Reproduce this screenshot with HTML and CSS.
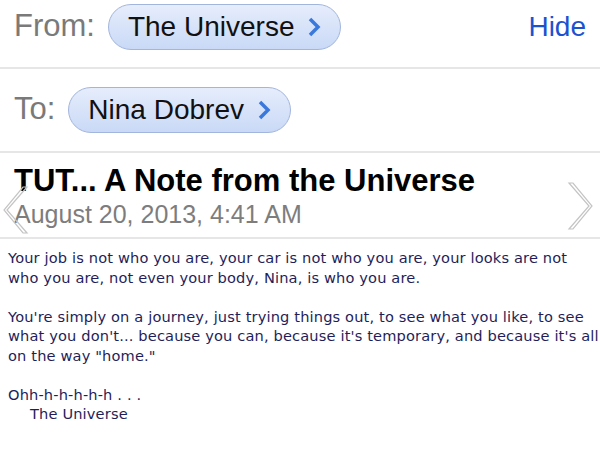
FILE: index.html
```html
<!DOCTYPE html>
<html lang="en">
<head>
    <meta charset="UTF-8">
    <meta name="viewport" content="width=device-width, initial-scale=1.0">
    <title>TUT... A Note from the Universe</title>
    <link rel="stylesheet" href="styles.css">
</head>
<body>

    <!-- Sender -->
    <div class="row row-from">
        <span class="label">From:</span>
        <span class="pill">The Universe
            <svg class="pill-arrow" viewBox="0 0 14 22"><path d="M3 3 L11 11 L3 19" /></svg>
        </span>
        <span class="hide">Hide</span>
    </div>

    <!-- Recipient -->
    <div class="row row-to">
        <span class="label">To:</span>
        <span class="pill">Nina Dobrev
            <svg class="pill-arrow" viewBox="0 0 14 22"><path d="M3 3 L11 11 L3 19" /></svg>
        </span>
    </div>

    <!-- Subject -->
    <div class="subject">
        <h1>TUT... A Note from the Universe</h1>
        <div class="date">August 20, 2013, 4:41 AM</div>
        <svg class="nav nav-prev" viewBox="0 0 26 50"><path d="M24 2 L4 25 L24 48 L20 48 L1 25 L20 2 Z" /></svg>
        <svg class="nav nav-next" viewBox="0 0 26 50"><path d="M2 2 L22 25 L2 48 L6 48 L25 25 L6 2 Z" /></svg>
    </div>

    <!-- Message -->
    <div class="message">
        <p>Your job is not who you are, your car is not who you are, your looks are not who you are, not even your body, Nina, is who you are.</p>
        <p>You're simply on a journey, just trying things out, to see what you like, to see what you don't... because you can, because it's temporary, and because it's all on the way "home."</p>
        <p>Ohh-h-h-h-h-h . . .<br><span class="sign">The Universe</span></p>
    </div>

</body>
</html>
```

FILE: styles.css
```css
body {
    margin: 0;
    background: white;
    font-family: 'Liberation Sans', Arial, sans-serif;
    color: black;
    overflow: hidden;
}

.row {
    display: flex;
    align-items: flex-start;
    padding: 0 14px;
    border-bottom: 2px solid #e6e6e6;
}

.row-from {
    height: 63px;
    padding-top: 4px;
}

.row-to {
    height: 64px;
    padding-top: 18px;
}

.label {
    font-size: 31px;
    color: #7a7a7a;
    line-height: 44px;
    margin-right: 13px;
}

.pill {
    display: flex;
    align-items: center;
    height: 44px;
    padding: 0 19px 0 19px;
    font-size: 28px;
    color: #111;
    border: 1px solid #a2b5dc;
    border-radius: 23px;
    background: linear-gradient(#e6edfc, #c9d9f6);
}

.pill-arrow {
    width: 14px;
    height: 22px;
    margin-left: 13px;
}

.pill-arrow path {
    fill: none;
    stroke: #3b78dc;
    stroke-width: 3.5;
}

.hide {
    margin-left: auto;
    font-size: 28px;
    line-height: 46px;
    color: #1b52cf;
}

.subject {
    position: relative;
    height: 84px;
    padding: 0 14px;
    border-bottom: 2px solid #e6e6e6;
}

h1 {
    margin: 0;
    padding-top: 10px;
    font-size: 31px;
    line-height: 36px;
}

.date {
    font-size: 25px;
    line-height: 30px;
    color: #7d7d7d;
}

.nav {
    position: absolute;
    width: 26px;
    height: 50px;
}

.nav path {
    fill: none;
    stroke: #c4c4c4;
    stroke-width: 1.2;
}

.nav-prev {
    left: 3px;
    top: 32px;
}

.nav-next {
    right: 7px;
    top: 28px;
}

.message {
    width: 592px;
    padding: 9px 0 0 8px;
    font-family: 'DejaVu Sans', Verdana, sans-serif;
    font-size: 14.6px;
    letter-spacing: 0.15px;
    line-height: 19.5px;
    color: #1f1e5a;
}

.message p {
    margin: 0 0 19.5px;
}

.sign {
    padding-left: 22px;
}
```
